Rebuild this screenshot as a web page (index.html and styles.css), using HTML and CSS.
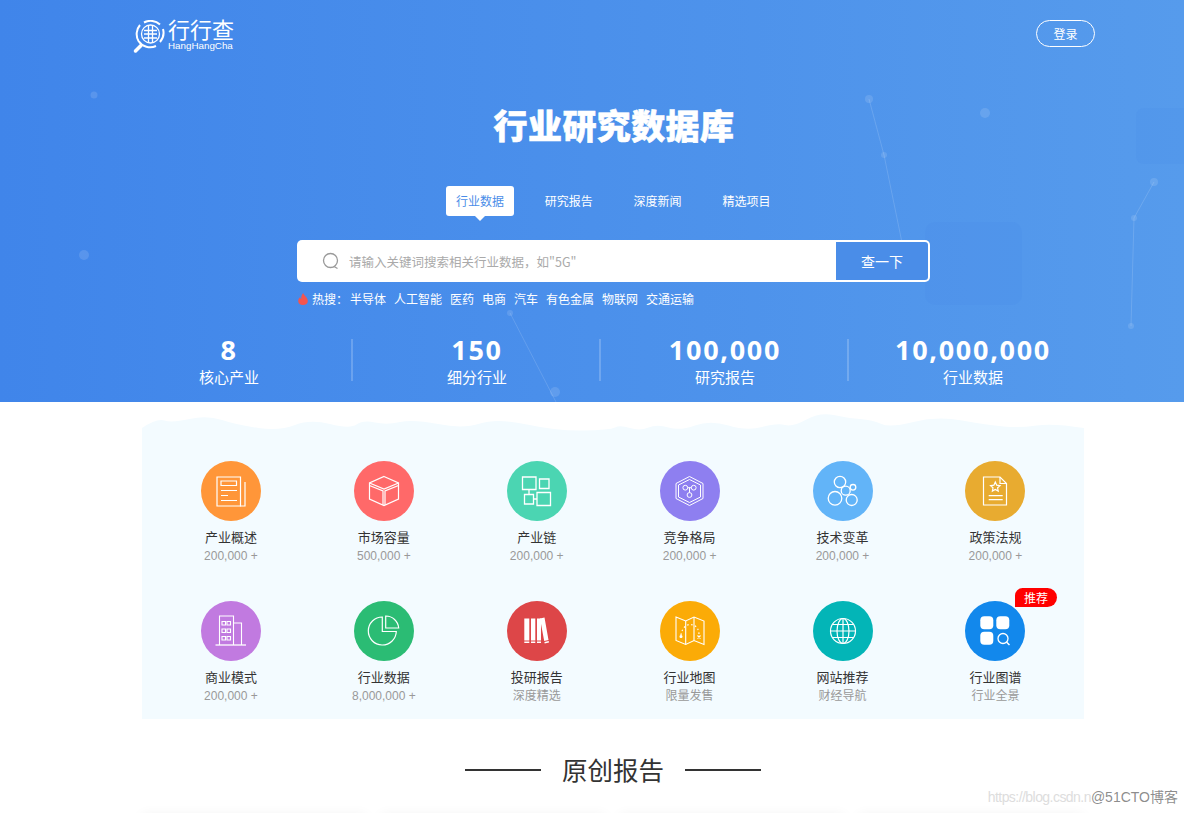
FILE: index.html
```html
<!DOCTYPE html>
<html lang="zh-CN">
<head>
    <meta charset="UTF-8">
    <meta name="viewport" content="width=device-width, initial-scale=1.0">
    <title>行行查 - 行业研究数据库</title>
    <link rel="stylesheet" href="styles.css">
</head>
<body>
    <section class="hero">
        <!-- Background decoration -->
        <svg class="hero-bg" viewBox="0 0 1184 402" width="1184" height="402">
            <g fill="none" stroke="#fff" stroke-opacity="0.14">
                <path d="M869 99L884 155L906 262"/>
                <path d="M1154 182L1134 218L1131 326"/>
                <path d="M510 313L556 402"/>
            </g>
            <g fill="#fff" fill-opacity="0.12">
                <circle cx="869" cy="99" r="4"/>
                <circle cx="884" cy="155" r="3"/>
                <circle cx="985" cy="113" r="5"/>
                <circle cx="94" cy="95" r="3.5"/>
                <circle cx="84" cy="255" r="5"/>
                <circle cx="1154" cy="182" r="4"/>
                <circle cx="1134" cy="218" r="3"/>
                <circle cx="1131" cy="326" r="3"/>
                <circle cx="510" cy="313" r="3"/>
                <circle cx="555" cy="392" r="5"/>
            </g>
            <g fill="#3f86e4" fill-opacity="0.12">
                <rect x="1136" y="108" width="60" height="56" rx="8"/>
                <rect x="925" y="222" width="97" height="83" rx="10"/>
            </g>
        </svg>

        <header class="topbar">
            <a class="logo" href="#">
                <svg class="logo-mark" viewBox="0 0 34 34" width="34" height="34">
                    <g fill="none" stroke="#fff">
                        <path stroke-width="2" d="M11 2.500A14 14 0 0 1 27 4.500M30 9A14 14 0 0 1 27 22M23 26A14 14 0 0 1 5.500 21A14 14 0 0 1 7 5"/>
                        <circle stroke-width="1.300" cx="17.500" cy="14" r="9"/>
                        <path stroke-width="1.300" d="M15.500 6V22M19.500 6V22M11 10.500H24M11 14H24M11 18H24"/>
                    </g>
                    <path stroke="#fff" stroke-width="3.500" stroke-linecap="round" d="M2.500 31L8 25.500"/>
                </svg>
                <span class="logo-text">
                    <span class="logo-cn">行行查</span>
                    <span class="logo-en">HangHangCha</span>
                </span>
            </a>
            <a class="login-btn" href="#">登录</a>
        </header>

        <h1 class="hero-title">行业研究数据库</h1>

        <ul class="tabs">
            <li class="tab active">行业数据</li>
            <li class="tab">研究报告</li>
            <li class="tab">深度新闻</li>
            <li class="tab">精选项目</li>
        </ul>

        <form class="search">
            <svg class="search-icon" viewBox="0 0 18 18" width="18" height="18">
                <circle cx="8.500" cy="8.500" r="7" fill="none" stroke="#9a9a9a" stroke-width="1.300"/>
                <path d="M12 14.500L15.500 16.500" stroke="#9a9a9a" stroke-width="1.300"/>
            </svg>
            <input class="search-input" type="text" placeholder="请输入关键词搜索相关行业数据，如&quot;5G&quot;">
            <button class="search-btn" type="button">查一下</button>
        </form>

        <div class="hot">
            <svg class="hot-icon" viewBox="0 0 10 12" width="10" height="12">
                <path fill="#f4554f" d="M5.200 0C5.600 2.200 9.800 4.300 9.800 8C9.800 10.400 7.800 12 5 12C2.200 12 .2 10.400 .2 8C.2 6.200 1.200 5 2 4.200C2.200 5.200 2.700 5.800 3.300 6C3 3.800 3.800 1.500 5.200 0Z"/>
            </svg>
            <span class="hot-label">热搜：</span>
            <a href="#">半导体</a>
            <a href="#">人工智能</a>
            <a href="#">医药</a>
            <a href="#">电商</a>
            <a href="#">汽车</a>
            <a href="#">有色金属</a>
            <a href="#">物联网</a>
            <a href="#">交通运输</a>
        </div>

        <ul class="stats">
            <li class="stat"><strong>8</strong><span>核心产业</span></li>
            <li class="stat"><strong>150</strong><span>细分行业</span></li>
            <li class="stat"><strong>100,000</strong><span>研究报告</span></li>
            <li class="stat"><strong>10,000,000</strong><span>行业数据</span></li>
        </ul>
    </section>

    <section class="panel">
        <svg class="panel-wave" viewBox="0 0 942 24" width="942" height="24" preserveAspectRatio="none">
            <path fill="#f3fbff" d="M0 24L0 18Q15 8 22.5 10.5Q30 13 47.5 9Q65 5 80 10Q95 15 116.5 18Q138 21 153 15Q168 9 188 14Q208 19 214.5 14.5Q221 10 233 12.5Q245 15 258 12Q271 9 296 14Q321 19 338 13.5Q355 8 385 14.5Q415 21 441.5 20.5Q468 20 473 17.5Q478 15 488 18Q498 21 506.5 17.5Q515 14 526.5 17.5Q538 21 553 15.5Q568 10 586.5 15.5Q605 21 620 17Q635 13 643 15Q651 17 664.5 9.5Q678 2 691.5 5Q705 8 718 9Q731 10 739.5 14Q748 18 771.5 12Q795 6 820 10.5Q845 15 861.5 16.5Q878 18 894.5 15.5Q911 13 942 18V24Z"/>
        </svg>
        <div class="panel-body">
            <a class="item" href="#">
                <span class="item-icon orange">
                    <svg viewBox="0 0 60 60" width="60" height="60" fill="none" stroke="#fff" stroke-width="1.200">
                        <path d="M16 16H39.500V45H16Z"/>
                        <path d="M44 21V45H39"/>
                        <path d="M20 20H35.500V24.500H20Z"/>
                        <path d="M20 29.500H36M20 34.500H27M20 39.500H36"/>
                    </svg>
                </span>
                <span class="item-name">产业概述</span>
                <span class="item-count">200,000 +</span>
            </a>
            <a class="item" href="#">
                <span class="item-icon coral">
                    <svg viewBox="0 0 60 60" width="60" height="60" fill="none" stroke="#fff" stroke-width="1.200">
                        <path d="M30 15.500L44.500 22V38L30 44.500L15.500 38V22Z"/>
                        <path d="M15.500 22L30 28L44.500 22M15.500 24.500L29 30V44M44.500 24.500L31 30V44"/>
                    </svg>
                </span>
                <span class="item-name">市场容量</span>
                <span class="item-count">500,000 +</span>
            </a>
            <a class="item" href="#">
                <span class="item-icon mint">
                    <svg viewBox="0 0 60 60" width="60" height="60" fill="none" stroke="#fff" stroke-width="1.300">
                        <path d="M15.500 16H29V28.500H15.500Z"/>
                        <path d="M32.500 18H42V27.500H32.500Z"/>
                        <path d="M17.500 33.500H26.500V43H17.500Z"/>
                        <path d="M30 31.500H43.500V44.500H30Z"/>
                        <path d="M22 28.500V33.500M26.500 38H30"/>
                    </svg>
                </span>
                <span class="item-name">产业链</span>
                <span class="item-count">200,000 +</span>
            </a>
            <a class="item" href="#">
                <span class="item-icon violet">
                    <svg viewBox="0 0 60 60" width="60" height="60" fill="none" stroke="#fff" stroke-width="1">
                        <path d="M29.500 15.500L43 22.500V37.500L29.500 44.500L16 37.500V22.500Z"/>
                        <path d="M29.500 18.500L40.500 24V36L29.500 41.500L18.500 36V24Z"/>
                        <circle cx="25.300" cy="26.700" r="2.400"/>
                        <circle cx="33.700" cy="26.700" r="2.400"/>
                        <circle cx="29.500" cy="34" r="2.400"/>
                        <path d="M27.700 26.700H31.300M29.500 26.700V31.600"/>
                    </svg>
                </span>
                <span class="item-name">竞争格局</span>
                <span class="item-count">200,000 +</span>
            </a>
            <a class="item" href="#">
                <span class="item-icon sky">
                    <svg viewBox="0 0 60 60" width="60" height="60" fill="none" stroke="#fff" stroke-width="1.300">
                        <circle cx="27" cy="21" r="5.700"/>
                        <circle cx="32.700" cy="29.700" r="4.500"/>
                        <circle cx="40" cy="26.300" r="2.800"/>
                        <circle cx="22" cy="37.300" r="6.800"/>
                        <circle cx="38.700" cy="39" r="5.500"/>
                    </svg>
                </span>
                <span class="item-name">技术变革</span>
                <span class="item-count">200,000 +</span>
            </a>
            <a class="item" href="#">
                <span class="item-icon gold">
                    <svg viewBox="0 0 60 60" width="60" height="60" fill="none" stroke="#fff" stroke-width="1.200">
                        <path d="M18.500 16H35L41.500 22.500V44H18.500Z"/>
                        <path d="M35 16V22.500H41.500"/>
                        <path d="M30.300 21L31.700 24.200L35 24.600L32.600 26.800L33.200 30L30.300 28.400L27.400 30L28 26.800L25.600 24.600L28.900 24.200Z"/>
                        <path d="M23.700 34.700H37.700M23.700 38.700H37.700"/>
                    </svg>
                </span>
                <span class="item-name">政策法规</span>
                <span class="item-count">200,000 +</span>
            </a>
            <a class="item" href="#">
                <span class="item-icon purple">
                    <svg viewBox="0 0 60 60" width="60" height="60" fill="none" stroke="#fff" stroke-width="1.100">
                        <path d="M18.500 44V15H32.500V44"/>
                        <path d="M32.500 22H40.500V44"/>
                        <path stroke-width="1.300" d="M14.500 44H45"/>
                        <path d="M21 20.500H24.500V24H21ZM26 20.500H29.500V24H26ZM21 28H24.500V31.500H21ZM26 28H29.500V31.500H26ZM21 35.500H24.500V39H21ZM26 35.500H29.500V39H26Z"/>
                    </svg>
                </span>
                <span class="item-name">商业模式</span>
                <span class="item-count">200,000 +</span>
            </a>
            <a class="item" href="#">
                <span class="item-icon green">
                    <svg viewBox="0 0 60 60" width="60" height="60" fill="none" stroke="#fff" stroke-width="1.200">
                        <path d="M28.300 16A14 14 0 1 0 42.300 30.500H28.300Z"/>
                        <path d="M31.700 15V27H44.700A13 13 0 0 0 31.700 15Z"/>
                    </svg>
                </span>
                <span class="item-name">行业数据</span>
                <span class="item-count">8,000,000 +</span>
            </a>
            <a class="item" href="#">
                <span class="item-icon red">
                    <svg viewBox="0 0 60 60" width="60" height="60" fill="#fff">
                        <path d="M17.300 17.500H22.300V39.500H17.300ZM17.300 40.500H22.300V42H17.300ZM24 17.500H28.300V39.500H24ZM24 40.500H28.300V42H24ZM30 17.500H34V39.500H30ZM30 40.500H34V42H30Z"/>
                        <path d="M33 17.500L37.500 16.500L41.500 39L37.200 40ZM37.400 41L41.700 40L42 41.500L37.700 42.500Z"/>
                    </svg>
                </span>
                <span class="item-name">投研报告</span>
                <span class="item-count cn">深度精选</span>
            </a>
            <a class="item" href="#">
                <span class="item-icon amber">
                    <svg viewBox="0 0 60 60" width="60" height="60" fill="none" stroke="#fff" stroke-width="1.100">
                        <path d="M16 16L25.700 20L34 16L44 20V43.500L34 39.500L25.700 43.500L16 39.500Z"/>
                        <path d="M25.700 20V43.500M34 16V39.500"/>
                        <path stroke-dasharray="1.500 2.500" stroke-width="1.200" d="M21 34C22 26 28 22 33 24C37 25 39 29 39 34"/>
                        <circle cx="21" cy="35.500" r="1" fill="#fff"/>
                        <path d="M37.500 34.500L40.500 37.500M40.500 34.500L37.500 37.500"/>
                    </svg>
                </span>
                <span class="item-name">行业地图</span>
                <span class="item-count cn">限量发售</span>
            </a>
            <a class="item" href="#">
                <span class="item-icon teal">
                    <svg viewBox="0 0 60 60" width="60" height="60" fill="none" stroke="#fff" stroke-width="1.200">
                        <circle cx="30" cy="30" r="12.500"/>
                        <ellipse cx="30" cy="30" rx="6" ry="12.500"/>
                        <path d="M30 17.500V42.500M17.500 30H42.500M19.500 23.500H40.500M19.500 36.500H40.500"/>
                    </svg>
                </span>
                <span class="item-name">网站推荐</span>
                <span class="item-count cn">财经导航</span>
            </a>
            <a class="item" href="#">
                <span class="item-badge">推荐</span>
                <span class="item-icon blue">
                    <svg viewBox="0 0 60 60" width="60" height="60">
                        <rect x="15.300" y="15.300" width="13" height="13" rx="4" fill="#fff"/>
                        <rect x="31.300" y="15.300" width="13" height="13" rx="4" fill="#fff"/>
                        <rect x="15.300" y="30.700" width="13" height="13" rx="4" fill="#fff"/>
                        <circle cx="38" cy="37.500" r="5" fill="none" stroke="#fff" stroke-width="1.300"/>
                        <path d="M41.500 41L44.500 44" stroke="#fff" stroke-width="1.500"/>
                    </svg>
                </span>
                <span class="item-name">行业图谱</span>
                <span class="item-count cn">行业全景</span>
            </a>
        </div>
    </section>

    <section class="reports">
        <h2 class="reports-title">原创报告</h2>
        <div class="report-cards">
            <div class="report-card"></div>
            <div class="report-card"></div>
            <div class="report-card"></div>
            <div class="report-card"></div>
        </div>
    </section>

    <div class="watermark">https://blog.csdn.n<span>@51CTO博客</span></div>
</body>
</html>
```

FILE: styles.css
```css
/* General Styles */
* {
    margin: 0;
    padding: 0;
    box-sizing: border-box;
}

html, body {
    height: 100vh;
    overflow: hidden;
}

body {
    position: relative;
    background: #fff;
    color: #333;
    font-family: 'Noto Sans CJK SC', 'Liberation Sans', sans-serif;
}

a {
    color: inherit;
    text-decoration: none;
}

ul {
    list-style: none;
}

/* Hero */
.hero {
    position: relative;
    height: 402px;
    overflow: hidden;
    color: #fff;
    background: linear-gradient(to right, #4085ea, #569bec);
}

.hero-bg {
    position: absolute;
    top: 0;
    left: 0;
}

.topbar,
.hero-title,
.tabs,
.search,
.hot,
.stats {
    position: relative;
}

.topbar {
    display: flex;
    justify-content: space-between;
    align-items: flex-start;
    width: 962px;
    margin-left: 133px;
    padding-top: 16px;
    height: 84px;
}

.logo {
    display: flex;
    align-items: flex-start;
}

.logo-mark {
    margin-top: 4px;
}

.logo-text {
    display: flex;
    flex-direction: column;
    margin-left: 1px;
}

.logo-cn {
    font-size: 22px;
    line-height: 24px;
    white-space: nowrap;
}

.logo-en {
    font-family: 'Liberation Sans', sans-serif;
    font-size: 9.800px;
    line-height: 11px;
}

.login-btn {
    width: 59px;
    height: 27px;
    margin-top: 4px;
    border: 1px solid #fff;
    border-radius: 14px;
    font-size: 12px;
    line-height: 26px;
    text-align: center;
}

.hero-title {
    width: 962px;
    margin-left: 133px;
    height: 102px;
    padding-top: 16px;
    font-size: 34px;
    font-weight: 900;
    line-height: 50px;
    letter-spacing: 0.4px;
    text-align: center;
    -webkit-text-stroke: 0.6px #fff;
}

/* Tabs */
.tabs {
    display: flex;
    gap: 20.800px;
    margin-left: 446px;
    height: 54px;
}

.tab {
    position: relative;
    width: 68px;
    height: 30px;
    border-radius: 3px;
    font-size: 12px;
    line-height: 29px;
    text-align: center;
}

.tab.active {
    background: #fff;
    color: #4a8de8;
}

.tab.active::after {
    content: "";
    position: absolute;
    left: 29px;
    bottom: -5px;
    border-left: 5px solid transparent;
    border-right: 5px solid transparent;
    border-top: 5px solid #fff;
}

/* Search */
.search {
    display: flex;
    align-items: center;
    width: 633px;
    height: 42px;
    margin-left: 297px;
    padding: 2px 2px 2px 25px;
    background: #fff;
    border-radius: 5px;
}

.search-icon {
    flex: none;
    margin-right: 9px;
}

.search-input {
    flex: 1;
    border: none;
    outline: none;
    font-family: inherit;
    font-size: 12.500px;
    color: #333;
}

.search-input::placeholder {
    color: #aaa;
}

.search-btn {
    flex: none;
    width: 92px;
    height: 38px;
    border: none;
    background: #4a8de8;
    color: #fff;
    border-radius: 0 3px 3px 0;
    font-family: inherit;
    font-size: 14px;
}

.hot {
    display: flex;
    align-items: center;
    gap: 8px;
    margin-left: 297px;
    margin-top: 7px;
    height: 19px;
    font-size: 12px;
    line-height: 19px;
}

.hot-icon {
    margin: 0 -4px 0 1px;
}

.hot-label {
    width: 30px;
    white-space: nowrap;
}

/* Stats */
.stats {
    display: grid;
    grid-template-columns: repeat(4, 248px);
    margin-left: 105px;
    margin-top: 31px;
}

.stat {
    display: flex;
    flex-direction: column;
    align-items: center;
    height: 42px;
    padding-left: 2px;
    border-right: 2px solid rgba(255, 255, 255, 0.2);
}

.stat:last-child {
    padding-left: 0;
    border-right: none;
}

.stat strong {
    font-family: 'Noto Sans', sans-serif;
    font-size: 27px;
    font-weight: 700;
    line-height: 30px;
    letter-spacing: 1.700px;
    margin-top: -4px;
}

.stat span {
    font-size: 15px;
    line-height: 24px;
}

/* Category panel */
.panel {
    width: 942px;
    margin: 8px 0 0 142px;
}

.panel-wave {
    display: block;
}

.panel-body {
    display: grid;
    grid-template-columns: repeat(6, 152.900px);
    grid-auto-rows: 140.300px;
    height: 285px;
    padding: 27px 12px 0 12.500px;
    background: #f3fbff;
}

.item {
    position: relative;
    display: flex;
    flex-direction: column;
    align-items: center;
}

.item-icon {
    width: 60px;
    height: 60px;
    margin-bottom: 6px;
    border-radius: 50%;
}

.item-icon svg {
    display: block;
}

.orange { background: #ff9639; }
.coral { background: #ff6969; }
.mint { background: #4bd5b2; }
.violet { background: #8e7ff0; }
.sky { background: #62b4f8; }
.gold { background: #e8ab30; }
.purple { background: #c17ae0; }
.green { background: #2bbc74; }
.red { background: #dd4648; }
.amber { background: #fbab07; }
.teal { background: #03b5b7; }
.blue { background: #1288ec; }

.item-name {
    font-size: 13px;
    line-height: 19px;
    color: #333;
}

.item-count {
    font-family: 'Liberation Sans', sans-serif;
    font-size: 12px;
    line-height: 19px;
    margin-top: 1px;
    color: #999;
}

.item-count.cn {
    font-family: 'Noto Sans CJK SC', sans-serif;
    margin-top: -1px;
}

.item-badge {
    position: absolute;
    top: -13px;
    left: 96px;
    width: 42px;
    height: 19px;
    background: #f00;
    color: #fff;
    border-radius: 8px 10px 10px 0;
    font-size: 12px;
    line-height: 19px;
    text-align: center;
}

/* Reports */
.reports {
    height: 94px;
    overflow: hidden;
}

.reports-title {
    display: flex;
    justify-content: center;
    align-items: center;
    gap: 21px;
    width: 942px;
    margin: 31px 0 0 142px;
    font-size: 25.500px;
    font-weight: 400;
    line-height: 38px;
    color: #333;
}

.reports-title::before,
.reports-title::after {
    content: "";
    width: 76px;
    height: 2px;
    margin-top: 2px;
    background: #333;
}

.report-cards {
    display: flex;
    gap: 15px;
    margin: 27px 0 0 142px;
}

.report-card {
    width: 224px;
    height: 200px;
    background: #fff;
    box-shadow: 0 0 12px rgba(0, 0, 0, 0.06);
}

.watermark {
    position: absolute;
    right: 6px;
    bottom: 6px;
    font-family: 'Liberation Sans', 'Noto Sans CJK SC', sans-serif;
    font-size: 14px;
    line-height: 20px;
    letter-spacing: -0.550px;
    color: #ddd;
}

.watermark span {
    letter-spacing: 0;
    color: rgba(90, 90, 90, 0.7);
}
```
